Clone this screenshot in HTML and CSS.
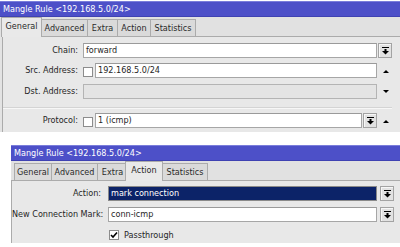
FILE: index.html
```html
<!DOCTYPE html>
<html>
<head>
<meta charset="utf-8">
<link rel="stylesheet" href="styles.css">
</head>
<body>
<div class="win top">
  <div class="title">Mangle Rule &lt;192.168.5.0/24&gt;</div>
  <div class="tabs">
    <div class="tab t-general sel">General</div>
    <div class="tab t-adv">Advanced</div>
    <div class="tab t-extra">Extra</div>
    <div class="tab t-action">Action</div>
    <div class="tab t-stats">Statistics</div>
  </div>
  <div class="content">
    <div class="row r-chain">
      <div class="label">Chain:</div>
      <div class="main"><div class="input">forward</div></div>
      <div class="side"><div class="dd"><svg width="7" height="8" viewBox="0 0 7 8"><rect x="0" y="0" width="7" height="1" fill="#000"/><rect x="2.5" y="2" width="2" height="2" fill="#000"/><polygon points="0,4 7,4 3.5,7.5" fill="#000"/></svg></div></div>
    </div>
    <div class="row r-src">
      <div class="label">Src. Address:</div>
      <div class="main"><div class="cb"></div><div class="input">192.168.5.0/24</div></div>
      <div class="side"><span class="arrow up"></span></div>
    </div>
    <div class="row r-dst">
      <div class="label">Dst. Address:</div>
      <div class="main"><div class="input disabled"></div></div>
      <div class="side"><span class="arrow down"></span></div>
    </div>
    <div class="sep"></div>
    <div class="row r-proto">
      <div class="label">Protocol:</div>
      <div class="main"><div class="cb"></div><div class="input">1 (icmp)</div><div class="dd inline"><svg width="7" height="8" viewBox="0 0 7 8"><rect x="0" y="0" width="7" height="1" fill="#000"/><rect x="2.5" y="2" width="2" height="2" fill="#000"/><polygon points="0,4 7,4 3.5,7.5" fill="#000"/></svg></div></div>
      <div class="side"><span class="arrow up"></span></div>
    </div>
  </div>
</div>

<div class="win bottom">
  <div class="title">Mangle Rule &lt;192.168.5.0/24&gt;</div>
  <div class="tabs">
    <div class="tab t-general">General</div>
    <div class="tab t-adv">Advanced</div>
    <div class="tab t-extra">Extra</div>
    <div class="tab t-action sel">Action</div>
    <div class="tab t-stats">Statistics</div>
  </div>
  <div class="content">
    <div class="row r-action">
      <div class="label">Action:</div>
      <div class="main"><div class="input selected">mark connection</div></div>
      <div class="side"><div class="dd wide"><svg width="7" height="8" viewBox="0 0 7 8"><rect x="0" y="0" width="7" height="1" fill="#000"/><rect x="2.5" y="2" width="2" height="2" fill="#000"/><polygon points="0,4 7,4 3.5,7.5" fill="#000"/></svg></div></div>
    </div>
    <div class="row r-mark">
      <div class="label">New Connection Mark:</div>
      <div class="main"><div class="input">conn-icmp</div></div>
      <div class="side"><div class="dd wide"><svg width="7" height="8" viewBox="0 0 7 8"><rect x="0" y="0" width="7" height="1" fill="#000"/><rect x="2.5" y="2" width="2" height="2" fill="#000"/><polygon points="0,4 7,4 3.5,7.5" fill="#000"/></svg></div></div>
    </div>
    <div class="row r-pass">
      <div class="label"></div>
      <div class="main"><div class="cb checked"><svg width="8" height="8" viewBox="0 0 8 8"><polyline points="1,4 3,6 7,1.5" fill="none" stroke="#000" stroke-width="1.6"/></svg></div><span class="cbtext">Passthrough</span></div>
      <div class="side"></div>
    </div>
  </div>
</div>
</body>
</html>
```
FILE: styles.css
```css
* { box-sizing: border-box; }
body {
  margin: 0;
  background: #ffffff;
  font-family: "DejaVu Sans Condensed", "DejaVu Sans", sans-serif;
  font-size: 9px;
  color: #262626;
}
.win { background: #e3e3e3; }
.win.top { margin-top: 1px; width: 400px; height: 131px; }
.win.bottom { margin: 13px 0 0 11px; width: 389px; height: 98px; }

.title {
  height: 16px;
  line-height: 15px;
  background: #4d50c8;
  border-top: 1px solid #7a7ddb;
  border-bottom: 1px solid #3f42b2;
  color: #fff;
  padding-left: 3px;
  white-space: nowrap;
}

.tabs {
  height: 19px;
  display: flex;
  align-items: flex-end;
  padding-left: 3px;
  background: #e1e1e1;
}
.tab {
  height: 17px;
  line-height: 16px;
  text-align: center;
  background: #dadada;
  border: 1px solid #ababab;
  border-bottom: none;
  margin-right: -1px;
  color: #2a2a2a;
  white-space: nowrap;
}
.t-general { width: 38px; }
.t-adv { width: 47px; }
.t-extra { width: 31px; }
.t-action { width: 34px; }
.t-stats { width: 46px; }
.tab.sel {
  height: 20px;
  line-height: 17px;
  background: #e9e9e9;
  margin: 0 -2px -1px -2px;
  padding: 0 2px;
  position: relative;
  z-index: 2;
}
.tab.sel.t-general { width: 41px; }
.tab.sel.t-action { width: 38px; }
.tab.sel + .tab { margin-left: 1px; }

.content {
  position: relative;
  background: #e8e8e8;
  border-left: 1px solid #ababab;
  border-top: 1px solid #ababab;
}
.win.top .content { margin-left: 2px; height: 96px; padding-top: 6px; }
.win.bottom .content { height: 63px; padding-top: 5px; }

.row { display: flex; height: 15px; }
.label {
  text-align: right;
  line-height: 15px;
  white-space: nowrap;
}
.win.top .label { width: 75px; margin-right: 5px; }
.win.bottom .label { width: 89px; margin-right: 7px; }
.main { flex: 1; display: flex; min-width: 0; }
.side { width: 23px; display: flex; align-items: center; }

.input {
  flex: 1;
  height: 15px;
  background: #fff;
  border: 1px solid #a6a6a6;
  border-top-color: #9a9a9a;
  line-height: 13px;
  padding-left: 2px;
  white-space: nowrap;
  overflow: hidden;
}
.input.disabled { background: #e4e4e4; border-color: #b4b4b4; }
.input.selected {
  background: #0c2368;
  border-color: #8a8a8a;
  color: #fff;
}

.cb {
  width: 10px;
  height: 10px;
  margin: 4px 2px 0 0;
  background: #fff;
  border: 1px solid #8c8c8c;
  display: flex;
  align-items: center;
  justify-content: center;
}
.cb.checked { margin: 2px 5px 0 1px; }
.cbtext { line-height: 15px; }

.dd {
  width: 14px;
  height: 15px;
  border: 1px solid #a3a3a3;
  background: #e2e2e2;
  box-shadow: inset 1px 1px 0 #f7f7f7;
  display: flex;
  align-items: center;
  justify-content: center;
  margin-left: 1px;
}
.dd.wide { margin-left: 3px; }
.dd.inline { margin-left: 1px; }

.arrow { width: 0; height: 0; margin-left: 6px; border-left: 3px solid transparent; border-right: 3px solid transparent; }
.arrow.up { border-bottom: 3px solid #000; margin-top: 1px; }
.arrow.down { border-top: 3px solid #000; }

.r-src { margin-top: 5px; }
.r-dst { margin-top: 6px; }
.sep {
  height: 2px;
  margin: 8px 8px 0 0;
  border-top: 1px solid #d4d4d4;
  border-bottom: 1px solid #f7f7f7;
}
.r-proto { margin-top: 4px; }

.r-mark { margin-top: 6px; }
.r-pass { margin-top: 6px; }
```
